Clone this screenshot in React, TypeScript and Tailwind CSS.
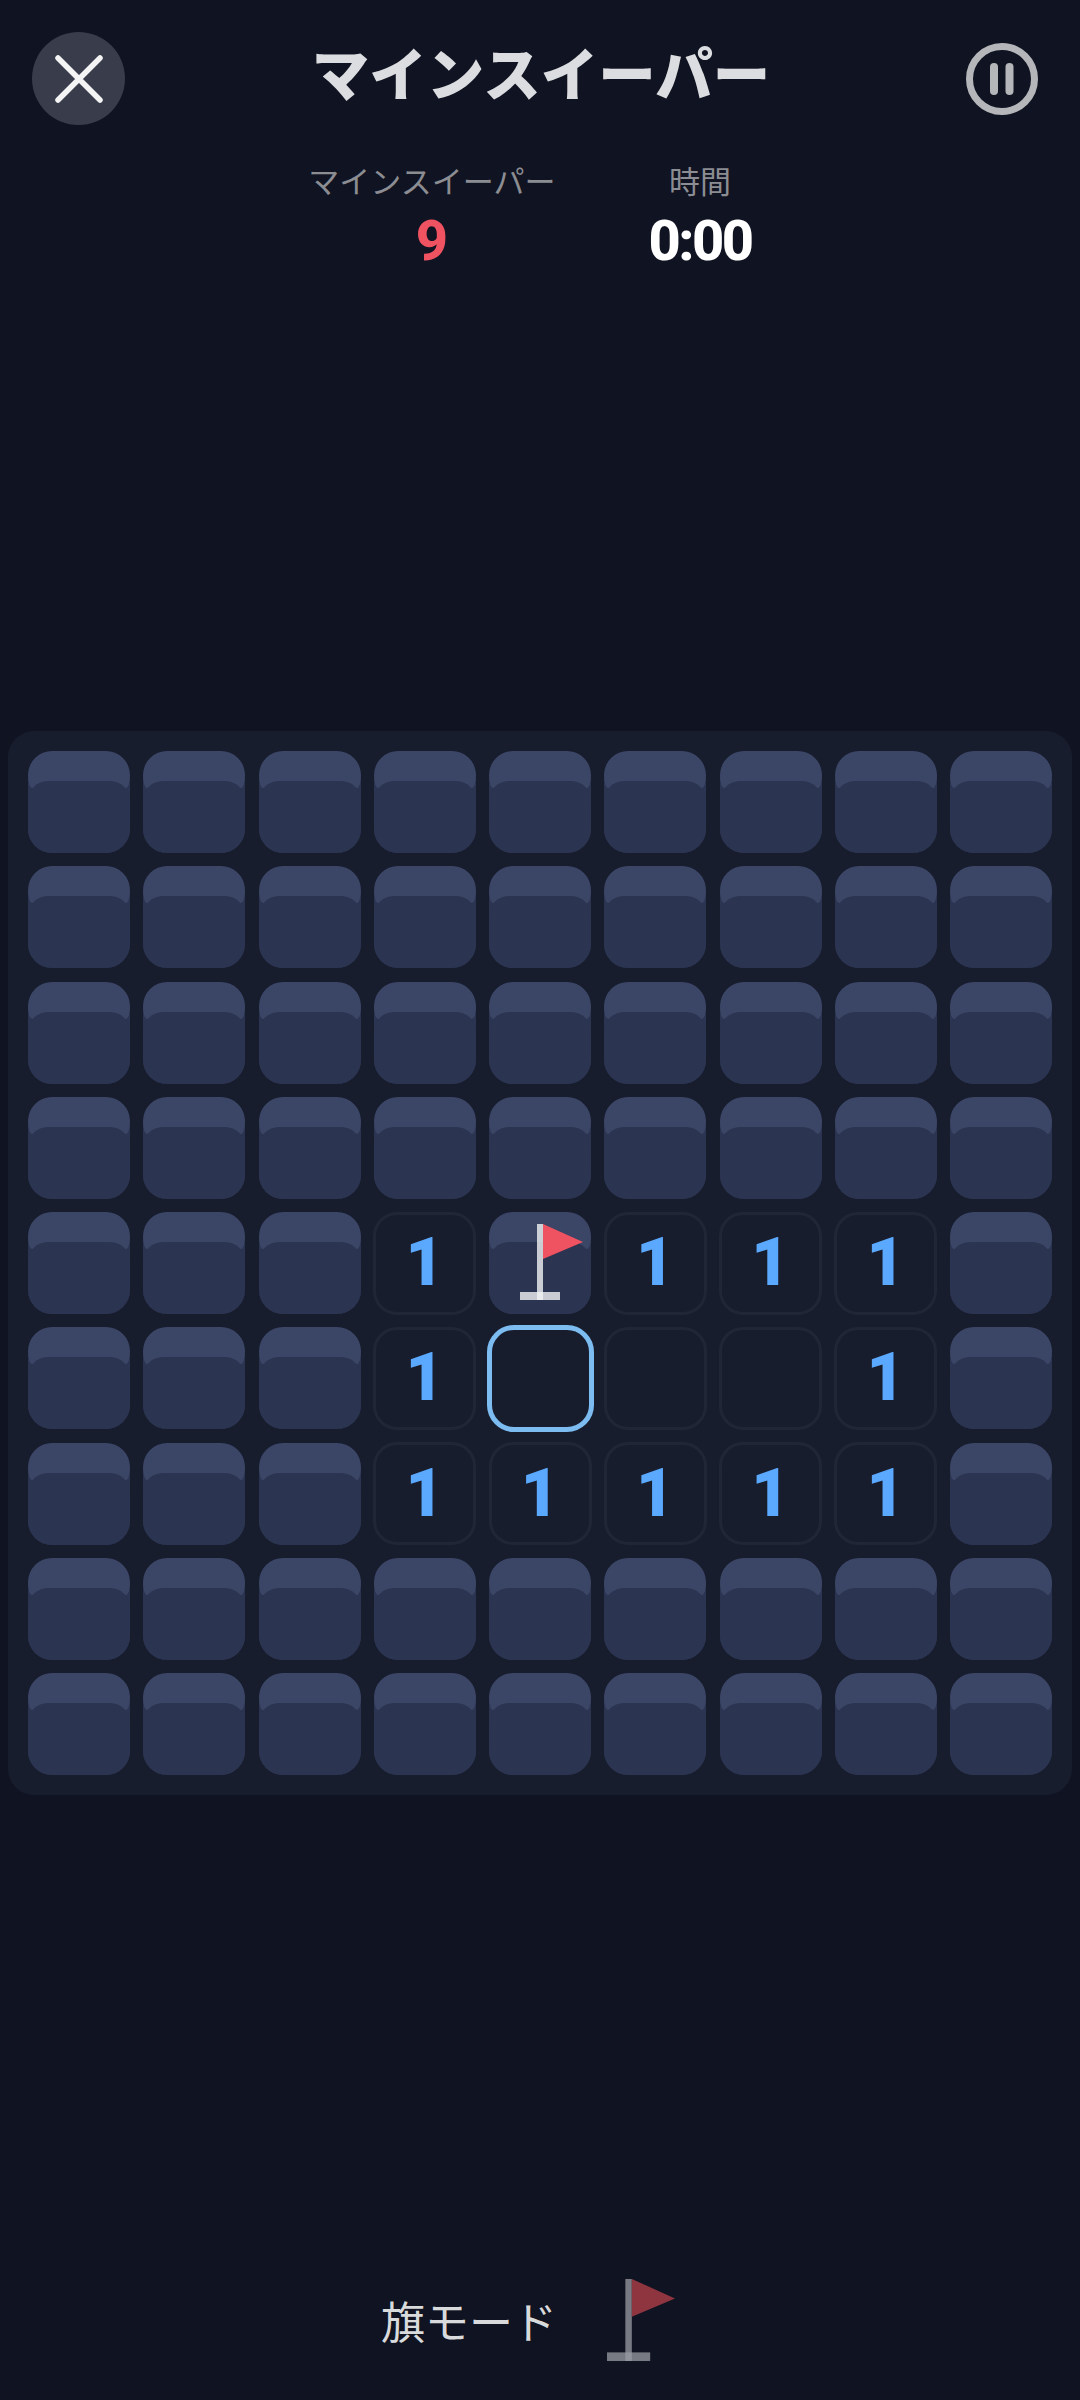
const CJK = "font-['Roboto','Noto_Sans_CJK_JP',sans-serif]";

type Cell = "c" | "f" | "e" | "s" | "1";

const layout: Cell[][] = [
  ["c", "c", "c", "c", "c", "c", "c", "c", "c"],
  ["c", "c", "c", "c", "c", "c", "c", "c", "c"],
  ["c", "c", "c", "c", "c", "c", "c", "c", "c"],
  ["c", "c", "c", "c", "c", "c", "c", "c", "c"],
  ["c", "c", "c", "1", "f", "1", "1", "1", "c"],
  ["c", "c", "c", "1", "s", "e", "e", "1", "c"],
  ["c", "c", "c", "1", "1", "1", "1", "1", "c"],
  ["c", "c", "c", "c", "c", "c", "c", "c", "c"],
  ["c", "c", "c", "c", "c", "c", "c", "c", "c"],
];

function Flag({ className, poleClass, clothClass }: { className: string; poleClass: string; clothClass: string }) {
  return (
    <svg viewBox="0 0 63 76" className={className}>
      <rect x="17" y="0" width="6" height="76" className={poleClass} />
      <rect x="0" y="68" width="40" height="8" className={poleClass} />
      <path d="M23 0 L63 18 L23 35 Z" className={clothClass} />
    </svg>
  );
}

function Covered({ flagged }: { flagged?: boolean }) {
  return (
    <div className="relative h-[102px] overflow-hidden rounded-[24px] bg-[#2b3450]">
      <div className="h-[37px] rounded-[24px_24px_4px_4px/24px_24px_13px_13px] bg-[#3b4565]" />
      <div className="absolute inset-x-0 top-[30px] bottom-0 rounded-t-[20px] bg-[#2b3450]" />
      {flagged && (
        <Flag
          className="absolute left-[31px] top-[12px] h-[76px] w-[63px]"
          poleClass="fill-[#f1f2f4] opacity-[0.8]"
          clothClass="fill-[#ef5260]"
        />
      )}
    </div>
  );
}

function Open({ value }: { value?: string }) {
  return (
    <div className="-m-[0.5px] flex h-[103px] items-center justify-center rounded-[24px] border-[3px] border-[#212637] bg-[#181d2e]">
      {value && <span className="text-[66px] leading-none font-black text-[#5aa9ff]">{value}</span>}
    </div>
  );
}

function Selected() {
  return <div className="-m-[2.5px] h-[107px] rounded-[27px] border-[5px] border-[#7cbcf0] bg-[#181d2e]" />;
}

export default function App() {
  return (
    <div className={`flex h-[2400px] w-[1080px] flex-col overflow-hidden bg-[#101321] ${CJK}`}>
      <header className="flex h-[125px] items-start justify-between pt-[32px] pr-[42px] pl-[32px]">
        <button className="flex h-[93px] w-[93px] items-center justify-center rounded-full bg-[#383c4b]">
          <svg viewBox="0 0 48 48" className="h-[48px] w-[48px]" stroke="#f4f4f5" strokeWidth="5.5" strokeLinecap="round">
            <path d="M3 3 L45 45 M45 3 L3 45" />
          </svg>
        </button>
        <h1 className="mr-[9px] pt-[10px] text-[57.5px] leading-[70px] font-black text-[#dcdde0]">マインスイーパー</h1>
        <button className="mt-[11px]">
          <svg viewBox="0 0 72 72" className="h-[72px] w-[72px]">
            <circle cx="36" cy="36" r="32.5" fill="none" stroke="#b5b6ba" strokeWidth="7" />
            <rect x="24" y="20" width="8" height="32" rx="4" fill="#b5b6ba" />
            <rect x="39.5" y="20" width="8" height="32" rx="4" fill="#b5b6ba" />
          </svg>
        </button>
      </header>

      <section className="mt-[38px] flex justify-center gap-[93px] pr-[20px]">
        <div className="flex flex-col items-center">
          <span className="text-[31px] leading-[40px] text-[#8b8d93]">マインスイーパー</span>
          <span className="text-[56px] leading-[76px] font-extrabold text-[#ef5260]">9</span>
        </div>
        <div className="flex flex-col items-center">
          <span className="text-[31px] leading-[40px] text-[#8b8d93]">時間</span>
          <span className="text-[56px] leading-[76px] font-extrabold tracking-[-2.5px] text-white">0:00</span>
        </div>
      </section>

      <main className="mx-[8px] mt-[452px] rounded-[26px] bg-[#181d2e] p-[20px]">
        <div className="grid grid-cols-9 gap-[13.25px]">
          {layout.flat().map((cell, i) => {
            if (cell === "c") return <Covered key={i} />;
            if (cell === "f") return <Covered key={i} flagged />;
            if (cell === "s") return <Selected key={i} />;
            return <Open key={i} value={cell === "1" ? "1" : undefined} />;
          })}
        </div>
      </main>

      <footer className="mt-[483px] flex items-center justify-center gap-[50px] pr-[24px]">
        <span className="text-[44px] leading-[60px] text-[#d9dadc]">旗モード</span>
        <Flag className="mb-[8px] h-[84px] w-[68px]" poleClass="fill-[#9a9ca4] opacity-[0.75]" clothClass="fill-[#8e3540]" />
      </footer>
    </div>
  );
}
